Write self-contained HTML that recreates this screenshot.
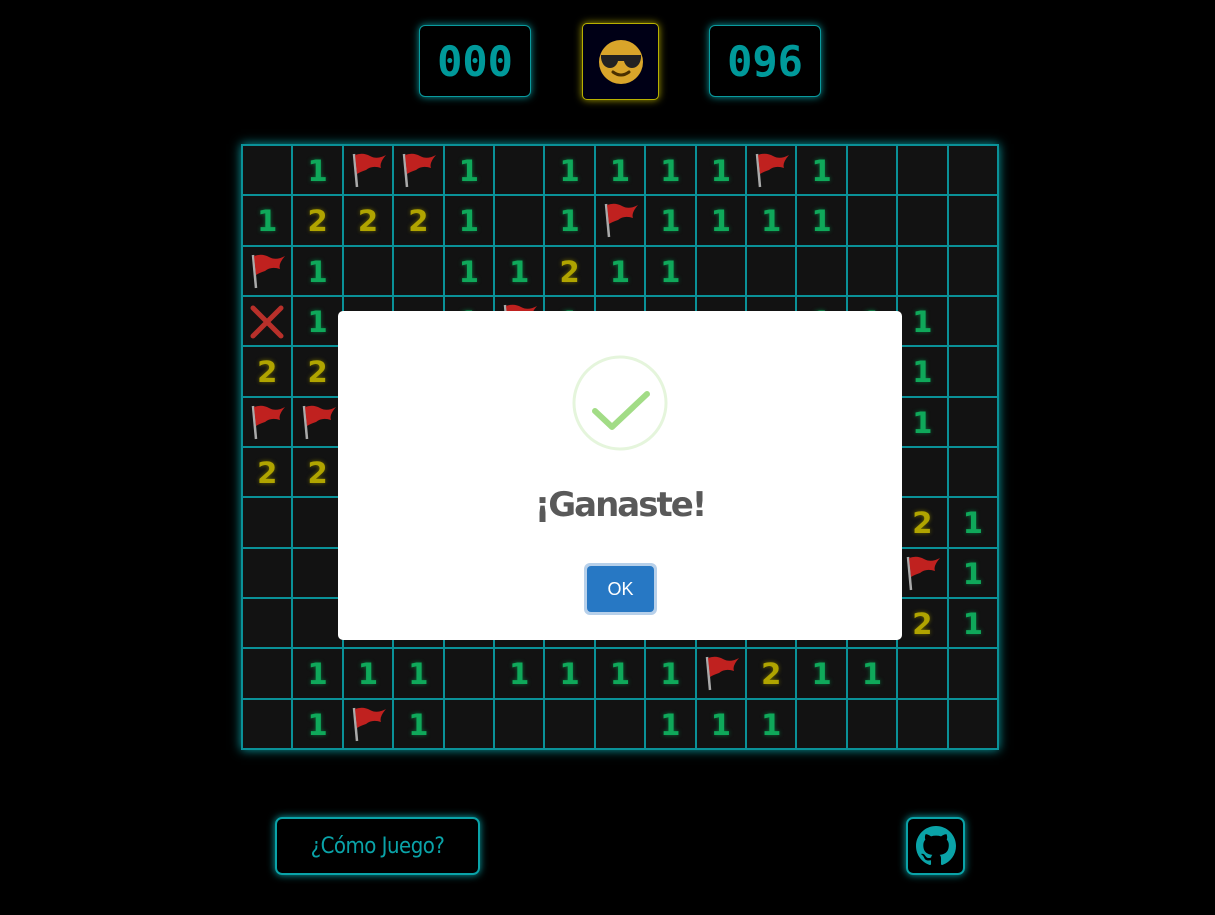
<!DOCTYPE html>
<html><head><meta charset="utf-8"><style>
*{box-sizing:border-box;margin:0;padding:0}
body{width:1215px;height:915px;background:#000;position:relative;overflow:hidden;font-family:"Liberation Sans",sans-serif}
.ctr{position:absolute;top:25px;height:72px;border:1px solid #0a9a9e;border-radius:6px;box-shadow:0 0 8px #0a9a9e;color:#00999a;font:bold 42px "DejaVu Sans Mono",monospace;display:flex;align-items:center;justify-content:center;background:#000}
.face{position:absolute;left:582px;top:23px;width:77px;height:77px;border:1px solid #b8b000;border-radius:5px;box-shadow:0 0 8px #a8a000;background:#000016;display:flex;align-items:center;justify-content:center}
.grid{position:absolute;left:241px;top:144px;width:758px;height:606px;background:#0a9198;padding:2px;display:grid;grid-template-columns:repeat(15,1fr);grid-template-rows:repeat(12,1fr);gap:2px;box-shadow:0 0 10px #0b9aa0}
.grid div{background:#121212;display:flex;align-items:center;justify-content:center;font:bold 29px "DejaVu Sans",sans-serif;padding-top:2px}
.g{color:#0fa85a;text-shadow:0 0 4px #0a6a3a}
.y{color:#b0a400;text-shadow:0 0 4px #6a6400}
.modal{position:absolute;left:338px;top:311px;width:564px;height:329px;background:#fff;border-radius:5px}
.btn{position:absolute;border:2px solid #0aa3a8;border-radius:7px;box-shadow:0 0 8px #0aa3a8;color:#0aa3a8;display:flex;align-items:center;justify-content:center}
</style></head><body>
<div class="ctr" style="left:419px;width:112px">000</div>
<div class="face"><svg width="48" height="48" viewBox="0 0 48 48"><circle cx="24" cy="24" r="22" fill="#d9a52a"/><path d="M4 17h40v3c-1 7-5 10-9 10s-7-3-8-7h-6c-1 4-4 7-8 7s-8-3-9-10z" fill="#222"/><path d="M16 34q8 6 16 0" stroke="#4a3000" stroke-width="3" fill="none" stroke-linecap="round"/></svg></div>
<div class="ctr" style="left:709px;width:112px">096</div>

<svg width="0" height="0" style="position:absolute"><defs><g id="fl"><path d="M6 3 L9 36" stroke="#aaa" stroke-width="2.5"/><path d="M7 4 Q15 1 22 5 T38 4 Q31 12 33 17 Q24 14 18 19 Q12 21 9 23z" fill="#c0211f"/></g><g id="xx"><path d="M4 4L32 32M32 4L4 32" stroke="#b8302a" stroke-width="5" stroke-linecap="round"/></g></defs></svg>

<div class="grid">
<div></div><div class="g">1</div><div><svg width="40" height="40"><use href="#fl"/></svg></div><div><svg width="40" height="40"><use href="#fl"/></svg></div><div class="g">1</div><div></div><div class="g">1</div><div class="g">1</div><div class="g">1</div><div class="g">1</div><div><svg width="40" height="40"><use href="#fl"/></svg></div><div class="g">1</div><div></div><div></div><div></div>
<div class="g">1</div><div class="y">2</div><div class="y">2</div><div class="y">2</div><div class="g">1</div><div></div><div class="g">1</div><div><svg width="40" height="40"><use href="#fl"/></svg></div><div class="g">1</div><div class="g">1</div><div class="g">1</div><div class="g">1</div><div></div><div></div><div></div>
<div><svg width="40" height="40"><use href="#fl"/></svg></div><div class="g">1</div><div></div><div></div><div class="g">1</div><div class="g">1</div><div class="y">2</div><div class="g">1</div><div class="g">1</div><div></div><div></div><div></div><div></div><div></div><div></div>
<div><svg width="36" height="36"><use href="#xx"/></svg></div><div class="g">1</div><div></div><div></div><div class="g">1</div><div><svg width="40" height="40"><use href="#fl"/></svg></div><div class="g">1</div><div></div><div></div><div></div><div></div><div class="g">1</div><div class="g">1</div><div class="g">1</div><div></div>
<div class="y">2</div><div class="y">2</div><div></div><div></div><div></div><div></div><div></div><div></div><div></div><div></div><div></div><div></div><div></div><div class="g">1</div><div></div>
<div><svg width="40" height="40"><use href="#fl"/></svg></div><div><svg width="40" height="40"><use href="#fl"/></svg></div><div></div><div></div><div></div><div></div><div></div><div></div><div></div><div></div><div></div><div></div><div></div><div class="g">1</div><div></div>
<div class="y">2</div><div class="y">2</div><div></div><div></div><div></div><div></div><div></div><div></div><div></div><div></div><div></div><div></div><div></div><div></div><div></div>
<div></div><div></div><div></div><div></div><div></div><div></div><div></div><div></div><div></div><div></div><div></div><div></div><div></div><div class="y">2</div><div class="g">1</div>
<div></div><div></div><div></div><div></div><div></div><div></div><div></div><div></div><div></div><div></div><div></div><div></div><div></div><div><svg width="40" height="40"><use href="#fl"/></svg></div><div class="g">1</div>
<div></div><div></div><div></div><div></div><div></div><div></div><div></div><div></div><div></div><div></div><div></div><div></div><div></div><div class="y">2</div><div class="g">1</div>
<div></div><div class="g">1</div><div class="g">1</div><div class="g">1</div><div></div><div class="g">1</div><div class="g">1</div><div class="g">1</div><div class="g">1</div><div><svg width="40" height="40"><use href="#fl"/></svg></div><div class="y">2</div><div class="g">1</div><div class="g">1</div><div></div><div></div>
<div></div><div class="g">1</div><div><svg width="40" height="40"><use href="#fl"/></svg></div><div class="g">1</div><div></div><div></div><div></div><div></div><div class="g">1</div><div class="g">1</div><div class="g">1</div><div></div><div></div><div></div><div></div>
</div>

<div class="modal">
<svg style="position:absolute;left:233px;top:43px" width="98" height="98" viewBox="0 0 98 98"><circle cx="49" cy="49" r="46" fill="none" stroke="#e5f5dc" stroke-width="3"/><path d="M24 57L41 73L76 40" fill="none" stroke="#a2dc86" stroke-width="6" stroke-linecap="round" stroke-linejoin="round"/></svg>
<div style="position:absolute;left:0;width:564px;top:174px;text-align:center;font:bold 34px 'DejaVu Sans',sans-serif;color:#595959;letter-spacing:-2px">¡Ganaste!</div>
<div style="position:absolute;left:246px;top:252px;width:73px;height:52px;border-radius:6px;background:#b7d0ea;padding:3px"><div style="width:100%;height:100%;background:#2778c4;border-radius:4px;color:#fff;font-size:18px;display:flex;align-items:center;justify-content:center">OK</div></div>
</div>

<div class="btn" style="left:275px;top:817px;width:205px;height:58px;font:22px 'DejaVu Sans Condensed','Liberation Sans Narrow',sans-serif;letter-spacing:-0.5px">¿Cómo Juego?</div>
<div class="btn" style="left:906px;top:817px;width:59px;height:58px"><svg width="40" height="40" viewBox="0 0 16 16"><path fill="#0aa3a8" d="M8 0C3.58 0 0 3.58 0 8c0 3.54 2.29 6.53 5.47 7.59.4.07.55-.17.55-.38 0-.19-.01-.82-.01-1.49-2.01.37-2.53-.49-2.69-.94-.09-.23-.48-.94-.82-1.13-.28-.15-.68-.52-.01-.53.63-.01 1.08.58 1.23.82.72 1.21 1.87.87 2.33.66.07-.52.28-.87.51-1.07-1.78-.2-3.64-.89-3.64-3.95 0-.87.31-1.59.82-2.15-.08-.2-.36-1.02.08-2.12 0 0 .67-.21 2.2.82.64-.18 1.32-.27 2-.27.68 0 1.36.09 2 .27 1.53-1.04 2.2-.82 2.2-.82.44 1.1.16 1.92.08 2.12.51.56.82 1.27.82 2.15 0 3.07-1.87 3.75-3.65 3.95.29.25.54.73.54 1.48 0 1.07-.01 1.93-.01 2.2 0 .21.15.46.55.38A8.01 8.01 0 0 0 16 8c0-4.42-3.58-8-8-8z"/></svg></div>
</body></html>
